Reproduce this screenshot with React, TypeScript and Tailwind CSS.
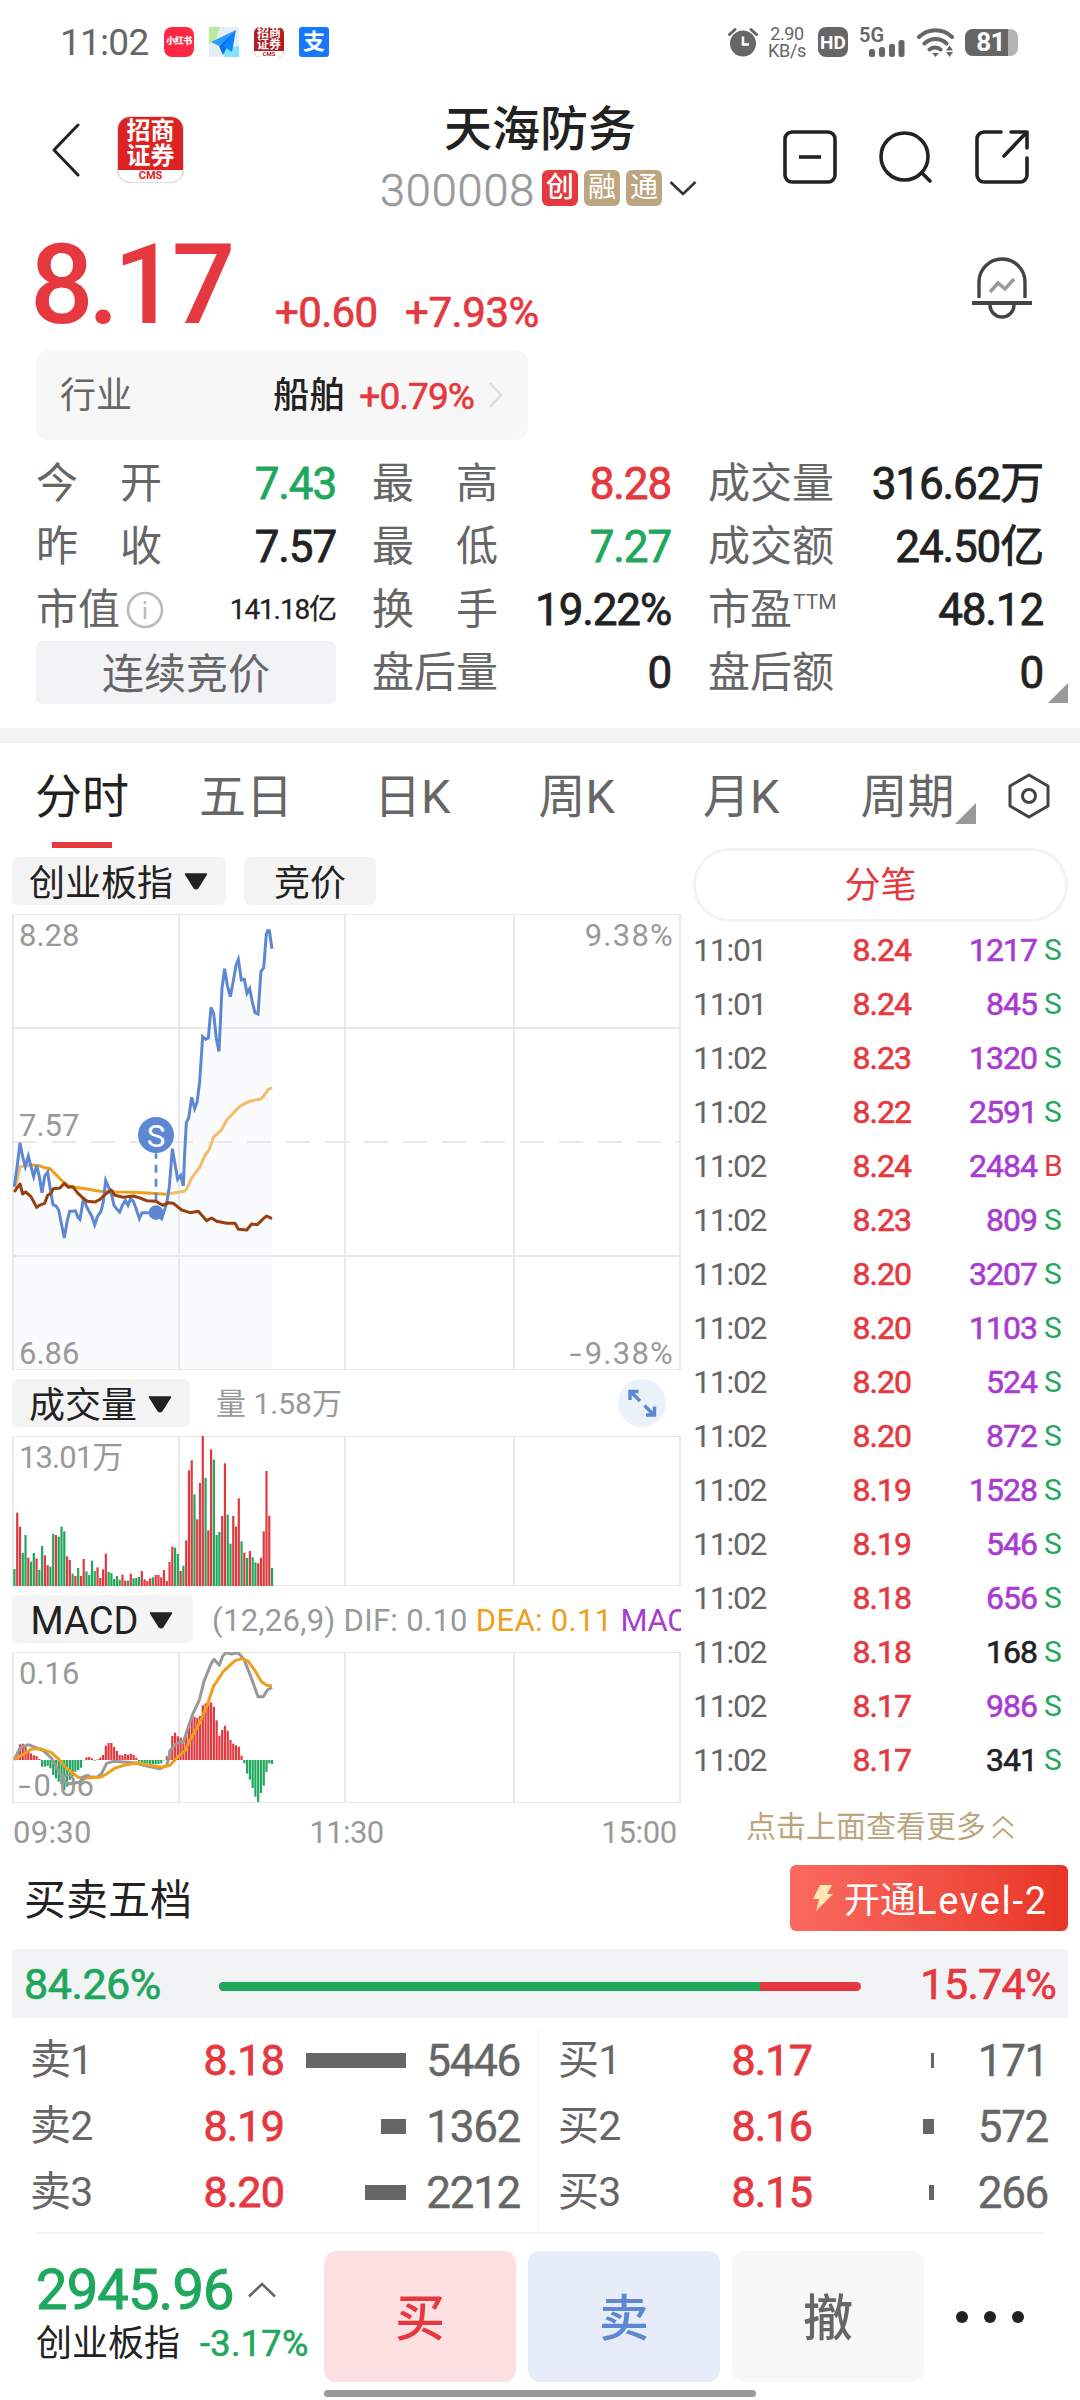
import type {ReactNode} from 'react';

type Tick = {time: string; price: string; vol: string; side: 'S' | 'B'; small?: boolean};
type Level = {label: string; price: string; bar: number; vol: string};

const TICKS: Tick[] = [
  {time: '11:01', price: '8.24', vol: '1217', side: 'S'},
  {time: '11:01', price: '8.24', vol: '845', side: 'S'},
  {time: '11:02', price: '8.23', vol: '1320', side: 'S'},
  {time: '11:02', price: '8.22', vol: '2591', side: 'S'},
  {time: '11:02', price: '8.24', vol: '2484', side: 'B'},
  {time: '11:02', price: '8.23', vol: '809', side: 'S'},
  {time: '11:02', price: '8.20', vol: '3207', side: 'S'},
  {time: '11:02', price: '8.20', vol: '1103', side: 'S'},
  {time: '11:02', price: '8.20', vol: '524', side: 'S'},
  {time: '11:02', price: '8.20', vol: '872', side: 'S'},
  {time: '11:02', price: '8.19', vol: '1528', side: 'S'},
  {time: '11:02', price: '8.19', vol: '546', side: 'S'},
  {time: '11:02', price: '8.18', vol: '656', side: 'S'},
  {time: '11:02', price: '8.18', vol: '168', side: 'S', small: true},
  {time: '11:02', price: '8.17', vol: '986', side: 'S'},
  {time: '11:02', price: '8.17', vol: '341', side: 'S', small: true}
];

const ASKS: Level[] = [
  {label: '卖1', price: '8.18', bar: 100, vol: '5446'},
  {label: '卖2', price: '8.19', bar: 25, vol: '1362'},
  {label: '卖3', price: '8.20', bar: 41, vol: '2212'}
];

const BIDS: Level[] = [
  {label: '买1', price: '8.17', bar: 3, vol: '171'},
  {label: '买2', price: '8.16', bar: 11, vol: '572'},
  {label: '买3', price: '8.15', bar: 5, vol: '266'}
];

// one bar per minute, chart units; volume is positive for an up minute
const VOLUME = [
  -51, 220, 178, -99, -153, 85, -73, -99, 83, -48, -120, 92, 63, -58, -156, 153, -148, -178, -164, 89, 78, -37, 30, -54,
  30, 81, -44, -33, -76, -45, 56, 24, 50, 97, -42, -39, -21, -30, -19, 34, 16, -16, 37, -23, -24, -27, 45, 20, 15, 23,
  -26, 33, 33, 26, 48, 15, 72, 118, -115, -96, 45, -61, 137, 347, 377, -275, 200, 309, 450, -324, 167, 410, -379, -153,
  -162, 210, 368, -214, -127, 210, 178, 263, -134, 100, -84, 105, -86, -71, 68, 85, 164, 345, 211, -54
];

const MACD = [
  2, 20, 47, 49, 40, 30, 20, 14, 12, 3, -20, -20, -18, -25, -45, -55, -65, -73, -90, -80, -60, -48, -35, -30, -23, -1,
  8, 9, 5, -2, 2, 7, 15, 43, 51, 51, 39, 27, 15, 14, 18, 16, 19, 15, 7, -5, -8, -10, -10, -12, -12, -12, -12, -10, -1,
  11, 30, 72, 82, 71, 67, 50, 75, 110, 132, 130, 126, 132, 164, 170, 170, 173, 160, 119, 73, 90, 103, 88, 60, 49, 44,
  40, 13, -10, -41, -59, -84, -110, -126, -99, -77, -36, -10, -12
];

const PRICE_LINE =
  '43,860 52,795 60,728 68,770 76,800 85,768 93,800 101,830 110,796 118,830 126,878 134,828 143,816 151,868 159,914 168,918 176,930 184,970 193,1014 201,966 209,934 218,934 226,932 234,952 240,958 251,892 259,918 267,934 276,950 284,974 292,950 303,934 310,905 317,842 326,862 334,880 342,916 351,928 359,936 368,914 376,902 384,916 392,896 400,904 409,928 418,956 426,938 468,938 485,956 500,910 508,860 517,746 526,798 533,838 542,826 550,858 554,760 559,668 566,654 575,592 584,626 591,608 599,545 608,410 617,418 625,414 633,322 641,340 649,416 657,454 666,264 674,206 682,256 691,290 700,242 708,196 715,178 724,240 733,238 741,280 749,266 757,306 765,338 774,342 783,214 791,204 799,102 803,92 808,92 816,146';
const AVG_START = '43,862 52,840 60,800 75,797 93,795';
const AVG_MID =
  '93,795 118,797 130,802 150,806 170,826 190,846 205,858 225,862 265,868 300,874 340,876 400,877 440,879 500,883';
const AVG_END =
  '500,883 525,878 552,874 560,868 575,834 600,800 615,766 628,748 640,712 664,690 680,660 692,648 718,620 735,610 752,603 782,597 790,590 805,568 816,564';
const INDEX_LINE =
  '43,876 52,862 60,852 68,882 77,876 93,890 110,922 118,916 134,910 143,886 153,880 160,866 180,864 193,850 205,862 218,860 234,880 251,896 262,904 285,906 300,898 317,882 334,870 345,886 370,892 400,888 420,894 440,902 468,904 488,916 505,908 520,910 545,930 570,938 595,934 620,962 635,954 650,964 680,970 705,970 715,988 740,990 755,972 772,974 790,956 800,948 816,956';
const DIF_LINE =
  '43,1168 60,1134 85,1124 110,1134 130,1142 155,1165 176,1205 193,1234 205,1242 240,1236 262,1220 290,1222 305,1210 320,1180 340,1174 400,1178 440,1188 480,1196 500,1186 512,1140 525,1124 540,1116 550,1116 562,1080 577,1035 598,990 612,934 632,884 642,868 658,886 668,858 678,848 695,852 714,848 732,868 750,914 764,952 774,980 790,980 802,960 816,952';
const DEA_LINE =
  '43,1168 68,1154 93,1138 120,1136 155,1148 180,1172 205,1200 235,1222 260,1224 300,1222 320,1212 345,1194 380,1184 410,1178 440,1184 485,1192 510,1186 530,1164 555,1142 575,1100 600,1056 620,1010 640,950 670,904 705,872 728,866 745,874 765,902 785,936 800,946 816,948';

function Caret({className}: {className?: string}) {
  return (
    <svg viewBox="0 0 26 17" className={`h-[17px] w-[26px] shrink-0 ${className ?? ''}`}>
      <path d="M2.6 1h20.8L15 14.6q-2 2-4 0Z" fill="#222" stroke="#222" strokeWidth="1.6" strokeLinejoin="round" />
    </svg>
  );
}

function ChartGrid({top, bottom}: {top: number; bottom: number}) {
  return (
    <g stroke="#e8e8e8" strokeWidth="6">
      {[39, 537, 1035, 1542, 2040].map((x) => (
        <line key={x} x1={x} x2={x} y1={top} y2={bottom} />
      ))}
      <line x1="36" x2="2043" y1={top + 1.5} y2={top + 1.5} strokeWidth="3" />
      <line x1="36" x2="2043" y1={bottom - 1.5} y2={bottom - 1.5} strokeWidth="3" />
    </g>
  );
}

function Bars({data, base}: {data: number[]; base: number}) {
  return (
    <g>
      {data.map((v, i) => (
        <rect
          key={i}
          x={40 + i * 8.31}
          y={v > 0 || base === 648 ? base - Math.abs(v) : base}
          width="6.6"
          height={Math.abs(v)}
          fill={v > 0 ? '#e2393e' : '#1fa75d'}
        />
      ))}
    </g>
  );
}

function StatusBar() {
  return (
    <div className="flex h-[84px] shrink-0 items-center pl-[60px] pr-[62px] text-[#666]">
      <span className="w-[104px] text-[37px] leading-none tracking-[-0.02em]">11:02</span>
      <div className="flex gap-[15px]">
        <span className="flex size-[30px] items-center justify-center rounded-lg bg-[#ff2741] text-[9px] font-black tracking-[-0.5px] text-white">
          小红书
        </span>
        <svg viewBox="0 0 30 30" className="size-[30px]">
          <path d="M0 0h30v30H0z" fill="#e6eef2" />
          <path d="M0 0h11L7 12 0 17z" fill="#b9ec9a" />
          <path d="M15 22l15-3v11H15z" fill="#82e3fa" />
          <path d="M27 3 2 15l8 4z" fill="#2a9bff" />
          <path d="M27 3 10 19l4 9z" fill="#0a6cf0" />
          <path d="M27 3 14 19l9 6z" fill="#0c84ff" />
        </svg>
        <span className="flex size-[30px] flex-col items-center overflow-hidden rounded-md bg-[#b01c1f] text-[12px] font-bold text-white">
          <span className="leading-[12px]">招商</span>
          <span className="leading-[12px]">证券</span>
          <span className="w-full bg-white text-center text-[6px] leading-[6px] text-[#b01c1f]">CMS</span>
        </span>
        <span className="flex size-[30px] items-center justify-center rounded-[3px] bg-[#1677ff] text-[22px] font-bold leading-none text-white">
          支
        </span>
      </div>
      <div className="ml-auto flex items-center">
        <svg viewBox="0 0 30 30" className="h-[30px] w-[30px]">
          <circle cx="15" cy="16.5" r="13" fill="#666" />
          <path d="M1.5 7.5 7 2.5M28.5 7.5 23 2.5" stroke="#666" strokeWidth="3" strokeLinecap="round" />
          <path d="M15 9.5v8h6" stroke="#fff" strokeWidth="2.6" fill="none" />
        </svg>
        <div className="ml-[9px] w-[40px] text-center text-[18px] leading-[17px] tracking-[-0.02em]">
          <div>2.90</div>
          <div>KB/s</div>
        </div>
        <span className="ml-[11px] flex size-[30px] items-center justify-center rounded-lg bg-[#666] text-[19px] font-bold leading-none text-white">
          HD
        </span>
        <svg viewBox="0 0 46 30" className="ml-[11px] h-[30px] w-[46px] overflow-visible" fill="#666">
          <text x="0" y="15" fontSize="20" fontWeight="600" fontFamily="Roboto">
            5G
          </text>
          <rect x="10" y="22" width="6" height="8" rx="2.5" />
          <rect x="20" y="20" width="6" height="10" rx="2.5" />
          <rect x="30" y="17" width="6" height="13" rx="2.5" />
          <rect x="39.5" y="13" width="6" height="17" rx="2.5" />
        </svg>
        <svg viewBox="0 0 38 30" className="ml-[12px] h-[30px] w-[38px]" fill="none" stroke="#666" strokeWidth="4">
          <path d="M2 10a23.500 23.500 0 0 1 33 0M7.500 16.500a16 16 0 0 1 22 0M12.500 22.500a9 9 0 0 1 11 0" strokeLinecap="round" />
          <path d="M15 26h7l-3.500 4z" fill="#666" stroke="none" />
          <path d="M29 23.500h7l-3.500-5zM29 25h7l-3.500 5z" fill="#666" stroke="none" />
        </svg>
        <div className="ml-[10px] flex h-[27px] w-[53px] items-center rounded-[8px] bg-[#b3b3b3]">
          <span className="flex h-full w-[43px] items-center justify-center rounded-l-[8px] bg-[#666] pl-[8px]">
            <span className="text-[26px] font-bold leading-[27px] tracking-[-0.03em] text-white">81</span>
          </span>
        </div>
      </div>
    </div>
  );
}

function Header() {
  return (
    <div className="flex h-[136px] shrink-0 items-start pl-[52px]">
      <svg viewBox="0 0 28 54" className="mt-[39px] h-[54px] w-[28px]" fill="none" stroke="#222" strokeWidth="3">
        <path d="M26 2 2 27l24 25" strokeLinecap="round" strokeLinejoin="round" />
      </svg>
      <div className="ml-[37px] mt-[32px] flex size-[67px] flex-col items-center overflow-hidden rounded-[13px] border border-[#ddd] bg-[#dc2324] pt-[2px] text-[24px] font-bold text-white">
        <span className="leading-[25px]">招商</span>
        <span className="leading-[25px]">证券</span>
        <span className="mt-px w-full flex-1 bg-white text-center text-[11px] leading-[12px] text-[#dc2324]">CMS</span>
      </div>
      <div className="ml-[196px] w-[320px] pt-[21px]">
        <div className="pl-[64px] text-[48px] font-medium leading-[50px] text-[#222]">天海防务</div>
        <div className="mt-[15px] flex h-[36px] items-center gap-[6px]">
          <span className="w-[156px] pt-[4px] text-[45px] font-light leading-none tracking-[0.02em] text-[#999] [-webkit-text-stroke:0.6px]">
            300008
          </span>
          <span className="flex size-[36px] items-center justify-center rounded-md bg-[#e5383f] text-[28px] font-medium leading-none text-white">
            创
          </span>
          <span className="flex size-[36px] items-center justify-center rounded-md bg-[#bda57f] text-[28px] leading-none text-white">
            融
          </span>
          <span className="flex size-[36px] items-center justify-center rounded-md bg-[#bda57f] text-[28px] leading-none text-white">
            通
          </span>
          <svg viewBox="0 0 28 16" className="ml-px h-[16px] w-[28px]" fill="none" stroke="#333" strokeWidth="2.600">
            <path d="m1.500 2 12.500 12L26.500 2" />
          </svg>
        </div>
      </div>
      <div className="ml-[83px] mt-[46px] flex gap-[42px] text-[#222]">
        <svg viewBox="0 0 54 54" className="size-[54px]" fill="none" stroke="currentColor" strokeWidth="3.600">
          <rect x="2" y="2" width="50" height="50" rx="7" />
          <path d="M16 27h22" strokeWidth="3.600" />
        </svg>
        <svg viewBox="0 0 54 54" className="size-[54px]" fill="none" stroke="currentColor" strokeWidth="3.600">
          <circle cx="25.500" cy="26.500" r="23.500" />
          <path d="m43 43 8 8" strokeLinecap="round" />
        </svg>
        <svg viewBox="0 0 54 54" className="size-[54px]" fill="none" stroke="currentColor" strokeWidth="3.600">
          <path d="M26 2H9a7 7 0 0 0-7 7v36a7 7 0 0 0 7 7h36a7 7 0 0 0 7-7V28" strokeLinecap="round" />
          <path d="M36 2h16v16M51 3 29 26" strokeLinecap="round" strokeLinejoin="round" />
        </svg>
      </div>
    </div>
  );
}

function Quote({label, value, tone = 'text-[#222]', spread}: {label: ReactNode; value: string; tone?: string; spread?: boolean}) {
  return (
    <div className="flex h-[63px] items-center justify-between">
      <span
        className={`flex w-[126px] whitespace-nowrap text-[42px] leading-none text-[#666] ${spread ? 'justify-between' : ''}`}
      >
        {label}
      </span>
      <span
        className={`whitespace-nowrap text-[44px] leading-none tracking-[-0.026em] [-webkit-text-stroke:0.8px] ${tone}`}
      >
        {value}
      </span>
    </div>
  );
}

function Spread({text}: {text: string}) {
  return (
    <>
      <span>{text[0]}</span>
      <span>{text[1]}</span>
    </>
  );
}

function PriceBlock() {
  return (
    <>
      <div className="flex h-[130px] shrink-0 pl-[30px] pr-[47px] text-[#e5383f]">
        <span className="w-[245px] text-[112px] font-medium leading-[130px] tracking-[-0.05em]">8.17</span>
        <span className="mt-[71px] w-[130px] text-[42px] leading-[44px] tracking-[-0.015em] [-webkit-text-stroke:0.7px]">
          +0.60
        </span>
        <span className="mt-[71px] text-[42px] leading-[44px] tracking-[-0.01em] [-webkit-text-stroke:0.7px]">+7.93%</span>
        <svg viewBox="0 0 62 62" className="ml-auto mt-[37px] size-[62px]" fill="none" stroke="#444" strokeWidth="3.400">
          <path d="M8 41V25a23 23 0 0 1 46 0v16" />
          <path d="M1 46h60" strokeWidth="4" />
          <path d="M19 48a12 12 0 0 0 24 0" />
          <path d="m19 35 8-9 7 6 9-10" stroke="#999" />
        </svg>
      </div>
      <div className="ml-[36px] flex h-[90px] w-[492px] shrink-0 items-center rounded-xl bg-[#f7f7f7] pl-[24px] pr-[24px] pt-[2px] text-[36px] leading-none">
        <span className="text-[#666]">行业</span>
        <span className="ml-auto font-medium text-[#222]">船舶</span>
        <span className="ml-[14px] text-[37px] tracking-[-0.025em] text-[#e5383f] [-webkit-text-stroke:0.6px]">+0.79%</span>
        <svg viewBox="0 0 16 28" className="mb-[2px] ml-[14px] h-[28px] w-[16px]" fill="none" stroke="#ddd" strokeWidth="2.500">
          <path d="m2 2 11 12L2 26" />
        </svg>
      </div>
      <div className="relative mt-[12px] flex h-[276px] shrink-0 pl-[36px] pr-[36px]">
        <div className="w-[300px]">
          <Quote label={<Spread text="今开" />} value="7.43" tone="text-[#1fa75d]" spread />
          <Quote label={<Spread text="昨收" />} value="7.57" spread />
          <div className="flex h-[63px] items-center whitespace-nowrap">
            <span className="text-[42px] leading-none text-[#666]">市值</span>
            <svg viewBox="0 0 38 38" className="ml-[6px] size-[38px]" fill="none" stroke="#bbb" strokeWidth="2.600">
              <circle cx="19" cy="19" r="17" />
              <path d="M19 16v12M19 10v3" />
            </svg>
            <span className="ml-auto text-[28px] leading-none tracking-[-0.04em] text-[#222] [-webkit-text-stroke:0.3px]">
              141.18亿
            </span>
          </div>
          <div className="flex h-[63px] items-center justify-center rounded-md bg-[#f2f3f5] pt-[5px] text-[42px] leading-none text-[#666]">
            连续竞价
          </div>
        </div>
        <div className="ml-[36px] w-[299px]">
          <Quote label={<Spread text="最高" />} value="8.28" tone="text-[#e5383f]" spread />
          <Quote label={<Spread text="最低" />} value="7.27" tone="text-[#1fa75d]" spread />
          <Quote label={<Spread text="换手" />} value="19.22%" spread />
          <Quote label="盘后量" value="0" />
        </div>
        <div className="ml-[37px] w-[335px]">
          <Quote label="成交量" value="316.62万" />
          <Quote label="成交额" value="24.50亿" />
          <Quote
            label={
              <>
                市盈<span className="ml-px text-[21px] leading-[26px]">TTM</span>
              </>
            }
            value="48.12"
          />
          <Quote label="盘后额" value="0" />
        </div>
        <svg viewBox="0 0 20 20" className="absolute left-[1048px] top-[231px] size-[20px]">
          <path d="M20 0v20H0z" fill="#999" />
        </svg>
      </div>
    </>
  );
}

function Tabs() {
  const tabs = [
    {name: '五日', cls: 'ml-[70px]'},
    {name: '日K', cls: 'ml-[81px]'},
    {name: '周K', cls: 'ml-[88px]'},
    {name: '月K', cls: 'ml-[88px]'},
    {name: '周期', cls: 'ml-[81px]'}
  ];

  return (
    <div className="flex h-[105px] shrink-0 items-start pl-[35px] text-[47px] leading-[107px] text-[#666]">
      <div className="flex w-[94px] flex-col items-center text-[#222]">
        <span className="h-[99px]">分时</span>
        <span className="h-[6px] w-[60px] bg-[#e5383f]" />
      </div>
      {tabs.map((t) => (
        <span key={t.name} className={`shrink-0 whitespace-nowrap ${t.cls}`}>
          {t.name}
        </span>
      ))}
      <svg viewBox="0 0 21 21" className="mt-[60px] size-[21px] shrink-0">
        <path d="M21 0v21H0z" fill="#999" />
      </svg>
      <svg
        viewBox="0 0 42 46"
        className="ml-auto mr-[30px] mt-[30px] h-[46px] w-[42px] shrink-0"
        fill="none"
        stroke="#444"
        strokeWidth="3"
      >
        <path d="m21 2 19 11v20L21 44 2 33V13z" strokeLinejoin="round" />
        <circle cx="21" cy="23" r="6.500" />
      </svg>
    </div>
  );
}

function Charts() {
  return (
    <div className="w-[669px]">
      <div className="mt-[9px] flex h-[48px] gap-[18px] text-[36px] leading-none text-[#222]">
        <span className="flex w-[214px] items-center justify-center rounded-md bg-[#f4f4f4] pt-[5px]">
          创业板指
          <Caret className="mb-[4px] ml-[10px]" />
        </span>
        <span className="flex w-[132px] items-center justify-center rounded-md bg-[#f4f4f4] pt-[5px]">竞价</span>
      </div>

      <div className="relative mt-[9px] h-[456px] text-[31px] leading-none text-[#999]">
        <svg viewBox="36 42 2007 1368" className="block h-[456px] w-[669px]" fill="none">
          <polygon points={`43,1410 ${PRICE_LINE} 816,1410`} fill="#f9fbfd" />
          <ChartGrid top={42} bottom={1410} />
          <g stroke="#e8e8e8" strokeWidth="6">
            <path d="M36 384h2007M36 1068h2007" />
            <path d="M36 726h2007" strokeDasharray="72 45" strokeDashoffset="-3" />
          </g>
          <polyline points={AVG_START} stroke="#f2be6c" strokeWidth="9" />
          <polyline points={AVG_END} stroke="#f2be6c" strokeWidth="9" />
          <polyline points={AVG_MID} stroke="#ee9f1c" strokeWidth="9" />
          <polyline points={PRICE_LINE} stroke="#5e87d3" strokeWidth="9" />
          <path d="M468 760v170" stroke="#5e87d3" strokeWidth="8" strokeDasharray="24 18" strokeDashoffset="8" />
          <circle cx="468" cy="938" r="22" fill="#5e87d3" />
          <polyline points={INDEX_LINE} stroke="#97400d" strokeWidth="9" strokeLinejoin="round" />
          <circle cx="468" cy="705" r="54" fill="#5e87d3" />
          <text x="468" y="742" textAnchor="middle" fontSize="94" fontFamily="Roboto" fill="#fff">
            S
          </text>
        </svg>
        <span className="absolute left-[7px] top-[6px]">8.28</span>
        <span className="absolute right-[7px] top-[6px] tracking-[0.04em]">9.38%</span>
        <span className="absolute left-[7px] top-[196px]">7.57</span>
        <span className="absolute bottom-[1px] left-[7px]">6.86</span>
        <span className="absolute bottom-[1px] right-[7px] tracking-[0.04em]">
          <span className="inline-block scale-x-140 pr-[3px]">-</span>9.38%
        </span>
      </div>

      <div className="mt-[9px] flex h-[48px] items-center leading-none">
        <span className="flex h-full w-[178px] items-center justify-center rounded-md bg-[#f4f4f4] pt-[5px] text-[36px] text-[#222]">
          成交量
          <Caret className="mb-[2px] ml-[10px]" />
        </span>
        <span className="ml-[26px] pt-[2px] text-[30px] text-[#999]">量 1.58万</span>
        <svg viewBox="0 0 48 48" className="ml-auto mr-[15px] size-[48px]" fill="none" stroke="#5e87d3" strokeWidth="3.400">
          <circle cx="24" cy="24" r="24" fill="#ebf1fb" stroke="none" />
          <path d="m22 22-8-8M12 21v-8.500h8.500M26.500 26.500l8 8M36.500 27.500V36H28" />
        </svg>
      </div>
      <div className="relative mt-[9px] h-[150px] text-[31px] leading-none text-[#999]">
        <svg viewBox="36 198 2007 450" className="block h-[150px] w-[669px]">
          <ChartGrid top={198} bottom={648} />
          <Bars data={VOLUME} base={648} />
        </svg>
        <span className="absolute left-[7px] top-[6px] tracking-[-0.03em]">13.01万</span>
      </div>

      <div className="mt-[9px] flex h-[48px] items-center overflow-hidden whitespace-nowrap leading-none">
        <span className="flex h-full w-[181px] shrink-0 items-center justify-center rounded-md bg-[#f4f4f4] pt-[4px] text-[38px] text-[#222]">
          MACD
          <Caret className="mb-[2px] ml-[10px]" />
        </span>
        <span className="ml-[19px] pt-[3px] text-[31px] tracking-[0.01em] text-[#999]">(12,26,9) DIF: 0.10</span>
        <span className="ml-[8px] pt-[3px] text-[31px] tracking-[0.01em] text-[#ee9f1c]">DEA: 0.11</span>
        <span className="ml-[8px] pt-[3px] text-[31px] tracking-[-0.01em] text-[#a93cd0]">MACD: -0.01</span>
      </div>
      <div className="relative mt-[9px] h-[151px] text-[31px] leading-none text-[#999]">
        <svg viewBox="36 846 2007 453" className="block h-[151px] w-[669px]" fill="none">
          <ChartGrid top={846} bottom={1299} />
          <Bars data={MACD} base={1170} />
          <polyline points={DIF_LINE} stroke="#999" strokeWidth="9" strokeLinejoin="round" />
          <polyline points={DEA_LINE} stroke="#ee9f1c" strokeWidth="9" strokeLinejoin="round" />
        </svg>
        <span className="absolute left-[7px] top-[6px]">0.16</span>
        <span className="absolute left-[9px] top-[118px]">
          <span className="inline-block scale-x-140 pr-[4px]">-</span>0.06
        </span>
      </div>
      <div className="flex h-[58px] items-center justify-between pl-px pr-[4px] text-[31px] leading-none tracking-[0.01em] text-[#999]">
        <span>09:30</span>
        <span className="tracking-[-0.02em]">11:30</span>
        <span className="tracking-[-0.01em]">15:00</span>
      </div>
    </div>
  );
}

function TickList() {
  return (
    <div className="ml-[12px] w-[375px]">
      <div className="flex h-[74px] items-center justify-center rounded-full border-[3px] border-[#f2f3f4] pt-[2px] text-[36px] leading-none text-[#e5383f]">
        分笔
      </div>
      {TICKS.map((t, i) => (
        <div key={i} className="flex h-[54px] items-center pt-px text-[32px] leading-none tracking-[-0.03em]">
          <span className="w-[139px] tracking-[-0.04em] text-[#666]">{t.time}</span>
          <span className="w-[79px] text-right text-[#e5383f] [-webkit-text-stroke:0.6px]">{t.price}</span>
          <span
            className={`w-[126px] text-right [-webkit-text-stroke:0.6px] ${t.small ? 'text-[#222]' : 'text-[#a93cd0]'}`}
          >
            {t.vol}
          </span>
          <span className={`ml-[7px] text-[30px] ${t.side === 'B' ? 'text-[#e5383f]' : 'text-[#1fa75d]'}`}>{t.side}</span>
        </div>
      ))}
      <div className="flex h-[82px] items-center pl-[53px] text-[30px] leading-none text-[#bda57f]">
        点击上面查看更多
        <svg viewBox="0 0 22 24" className="ml-[6px] h-[24px] w-[22px]" fill="none" stroke="currentColor" strokeWidth="2">
          <path d="m1 11 10-9 10 9M1 23l10-9 10 9" />
        </svg>
      </div>
    </div>
  );
}

function Levels({rows, bid}: {rows: Level[]; bid?: boolean}) {
  return (
    <div className={bid ? 'w-[509px] pl-[19px]' : 'box-content w-[508px] border-r border-[#f2f2f2] pl-[30px]'}>
      {rows.map((r) => (
        <div key={r.label} className="flex h-[66px] items-center pt-px text-[41px] leading-none tracking-[-0.02em] text-[#666]">
          <span className="w-[110px]">{r.label}</span>
          <span className="w-[144px] text-right text-[43px] text-[#e5383f] [-webkit-text-stroke:0.8px]">{r.price}</span>
          <span className="flex w-[122px] justify-end">
            <span className="h-[15px] bg-[#666]" style={{width: r.bar}} />
          </span>
          <span className="w-[114px] text-right text-[44px] tracking-[-0.03em] [-webkit-text-stroke:0.4px]">{r.vol}</span>
        </div>
      ))}
    </div>
  );
}

function OrderBook() {
  return (
    <>
      <div className="flex h-[87px] shrink-0 items-start justify-between pl-[24px] pr-[12px]">
        <span className="text-[42px] leading-[78px] text-[#222]">买卖五档</span>
        <span className="mt-[3px] flex h-[66px] w-[278px] items-center rounded-md bg-gradient-to-r from-[#fb6960] to-[#e83525] pl-[22px] pt-[5px] text-[36px] leading-none text-white">
          <svg viewBox="0 0 22 26" className="mb-[6px] mr-[10px] h-[26px] w-[22px]">
            <path d="M8 0h12l-5 9h6L4 26l3-12H1z" fill="#ffe6b5" />
          </svg>
          开通<span className="text-[38px] tracking-[0.045em]">Level-2</span>
        </span>
      </div>
      <div className="mx-[12px] flex h-[69px] shrink-0 items-center bg-[#f2f3f5] pl-[12px] pr-[12px] text-[43px] leading-none tracking-[-0.01em]">
        <span className="w-[195px] pt-px text-[#1fa75d] [-webkit-text-stroke:0.7px]">84.26%</span>
        <span className="mt-[6px] flex h-[9px] w-[642px] overflow-hidden rounded-full bg-[#e5383f]">
          <span className="w-[84.26%] bg-[#1fa75d]" />
        </span>
        <span className="ml-auto pt-px tracking-[-0.015em] text-[#e5383f] [-webkit-text-stroke:0.7px]">15.74%</span>
      </div>
      <div className="mt-[9px] flex h-[205px] shrink-0">
        <Levels rows={ASKS} />
        <Levels rows={BIDS} bid />
      </div>
    </>
  );
}

function BottomBar() {
  return (
    <div className="mx-[36px] flex h-[168px] shrink-0 flex-col border-t-2 border-[#f2f2f2]">
      <div className="mt-[17px] flex h-[131px]">
        <div className="w-[288px] whitespace-nowrap">
          <div className="flex h-[77px] items-center text-[56px] leading-none tracking-[-0.015em] text-[#1fa75d] [-webkit-text-stroke:1px]">
            2945.96
            <svg viewBox="0 0 28 16" className="ml-[14px] h-[16px] w-[28px]" fill="none" stroke="#666" strokeWidth="2.600">
              <path d="M1 14.500 14 2l13 12.500" />
            </svg>
          </div>
          <div className="flex items-center text-[36px] leading-[32px] text-[#222]">
            创业板指
            <span className="ml-[20px] tracking-[0.01em] text-[#1fa75d] [-webkit-text-stroke:0.6px]">-3.17%</span>
          </div>
        </div>
        <div className="flex gap-[12px] pt-0 text-[50px] font-medium leading-none">
          <span className="flex w-[192px] items-center justify-center rounded-xl bg-[#fde1e2] pt-[4px] text-[#e5383f]">买</span>
          <span className="flex w-[192px] items-center justify-center rounded-xl bg-[#e6edf9] pt-[4px] text-[#5e87d3]">卖</span>
          <span className="flex w-[192px] items-center justify-center rounded-xl bg-[#f7f7f7] pt-[4px] text-[#666]">撤</span>
        </div>
        <div className="ml-[32px] flex items-center gap-[16px]">
          <span className="size-[12px] rounded-full bg-[#222]" />
          <span className="size-[12px] rounded-full bg-[#222]" />
          <span className="size-[12px] rounded-full bg-[#222]" />
        </div>
      </div>
      <div className="ml-[288px] mt-[8px] h-[7px] w-[432px] rounded-full bg-[#999]" />
    </div>
  );
}

export default function App() {
  return (
    <div className="flex h-[2400px] w-[1080px] flex-col overflow-hidden bg-white font-[Roboto,'Noto_Sans_CJK_SC',sans-serif]">
      <StatusBar />
      <Header />
      <PriceBlock />
      <div className="h-[15px] shrink-0 bg-[#f2f3f5]" />
      <Tabs />
      <div className="flex h-[1014px] shrink-0 pl-[12px]">
        <Charts />
        <TickList />
      </div>
      <OrderBook />
      <BottomBar />
    </div>
  );
}
